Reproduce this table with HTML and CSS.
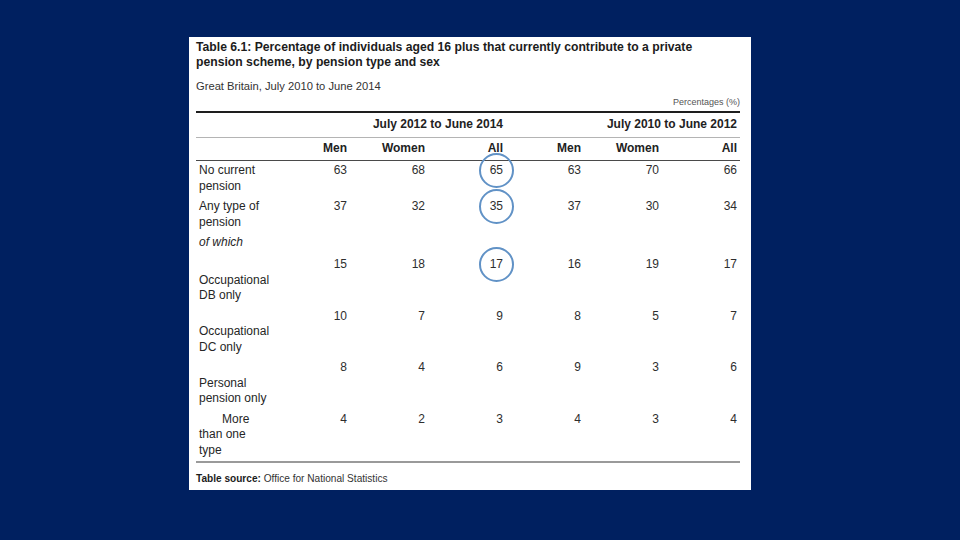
FILE: index.html
```html
<!DOCTYPE html>
<html lang="en">
<head>
<meta charset="utf-8">
<title>Table 6.1</title>
<link rel="stylesheet" href="styles.css">
</head>
<body>
<main class="slide">
  <section class="panel">
    <h1 class="title">Table 6.1: Percentage of individuals aged 16 plus that currently contribute to a private pension scheme, by pension type and sex</h1>
    <p class="subtitle">Great Britain, July 2010 to June 2014</p>
    <p class="units">Percentages (%)</p>
    <table class="data">
      <colgroup>
        <col class="c-label">
        <col class="c-num"><col class="c-num"><col class="c-num">
        <col class="c-num"><col class="c-num"><col class="c-num">
      </colgroup>
      <thead>
        <tr class="period">
          <th></th>
          <th colspan="3">July 2012 to June 2014</th>
          <th colspan="3">July 2010 to June 2012</th>
        </tr>
        <tr class="sex">
          <th></th>
          <th>Men</th><th>Women</th><th>All</th>
          <th>Men</th><th>Women</th><th>All</th>
        </tr>
      </thead>
      <tbody>
        <tr>
          <td class="label">No current<br>pension</td>
          <td>63</td><td>68</td><td><span class="ring">65</span></td>
          <td>63</td><td>70</td><td>66</td>
        </tr>
        <tr>
          <td class="label">Any type of<br>pension</td>
          <td>37</td><td>32</td><td><span class="ring">35</span></td>
          <td>37</td><td>30</td><td>34</td>
        </tr>
        <tr class="sub">
          <td class="label note">of which</td>
          <td></td><td></td><td></td><td></td><td></td><td></td>
        </tr>
        <tr>
          <td class="label">&nbsp;<br>Occupational<br>DB only</td>
          <td>15</td><td>18</td><td><span class="ring">17</span></td>
          <td>16</td><td>19</td><td>17</td>
        </tr>
        <tr>
          <td class="label">&nbsp;<br>Occupational<br>DC only</td>
          <td>10</td><td>7</td><td>9</td>
          <td>8</td><td>5</td><td>7</td>
        </tr>
        <tr>
          <td class="label">&nbsp;<br>Personal<br>pension only</td>
          <td>8</td><td>4</td><td>6</td>
          <td>9</td><td>3</td><td>6</td>
        </tr>
        <tr>
          <td class="label"><span class="indent">More</span><br>than one<br>type</td>
          <td>4</td><td>2</td><td>3</td>
          <td>4</td><td>3</td><td>4</td>
        </tr>
      </tbody>
    </table>
    <p class="source"><strong>Table source:</strong> Office for National Statistics</p>
  </section>
</main>
</body>
</html>
```

FILE: styles.css
```css
html, body {
  margin: 0;
  padding: 0;
}

body {
  background: #002060;
  width: 960px;
  height: 540px;
  overflow: hidden;
  font-family: "Liberation Sans", Arial, sans-serif;
}

.slide {
  padding: 37px 0 0 189px;
}

.panel {
  box-sizing: border-box;
  width: 562px;
  height: 453px;
  background: #ffffff;
  padding: 3px 11px 0 7px;
  color: #262626;
}

.title {
  margin: 0;
  max-width: 520px;
  font-size: 12.2px;
  line-height: 14.5px;
  font-weight: bold;
  color: #1c1c1c;
}

.subtitle {
  margin: 10px 0 0;
  font-size: 11.2px;
  line-height: 14px;
  color: #333333;
}

.units {
  margin: 3px 0 0;
  font-size: 9px;
  line-height: 12px;
  text-align: right;
  color: #555555;
}

.data {
  margin-top: 3px;
  width: 544px;
  border-collapse: collapse;
  table-layout: fixed;
  font-size: 12px;
  line-height: 15.5px;
  border-bottom: 2px solid #9a9a9a;
}

.c-label {
  width: 76px;
}

.c-num {
  width: 78px;
}

.data th {
  font-weight: bold;
  text-align: right;
  padding: 0 3px;
  color: #222222;
}

.period th {
  border-top: 2px solid #1e1e1e;
  border-bottom: 1px solid #b4b4b4;
  padding-top: 4px;
  padding-bottom: 4px;
}

.sex th {
  border-bottom: 1px solid #4a4a4a;
  padding-top: 3px;
  padding-bottom: 3.5px;
}

.data td {
  vertical-align: top;
  text-align: right;
  padding: 2.5px 3px;
  color: #2e2e2e;
  white-space: nowrap;
}

.data td.label {
  text-align: left;
  color: #262626;
}

.note {
  font-style: italic;
}

.sub td {
  padding-bottom: 4px;
}

.indent {
  padding-left: 23px;
}

.ring {
  position: relative;
  display: inline-block;
}

.ring::before {
  content: "";
  position: absolute;
  left: 50%;
  top: 50%;
  width: 31px;
  height: 31px;
  margin-left: -17.5px;
  margin-top: -18px;
  border: 2.2px solid #6192c6;
  border-radius: 50%;
}

.source {
  margin: 9px 0 0;
  font-size: 10.1px;
  line-height: 13px;
  color: #333333;
}

.source strong {
  color: #1c1c1c;
}
```
